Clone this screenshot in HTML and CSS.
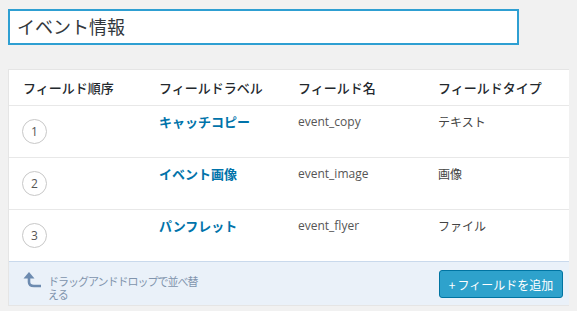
FILE: index.html
```html
<!DOCTYPE html>
<html lang="ja">
<head>
    <meta charset="UTF-8">
    <meta name="viewport" content="width=device-width, initial-scale=1.0">
    <title>イベント情報</title>
    <link rel="stylesheet" href="styles.css">
</head>
<body>
    <div class="title-box">イベント情報</div>

    <div class="field-table">
        <div class="row head">
            <div class="cell">フィールド順序</div>
            <div class="cell">フィールドラベル</div>
            <div class="cell">フィールド名</div>
            <div class="cell">フィールドタイプ</div>
        </div>

        <div class="row">
            <div class="cell order"><span class="num">1</span></div>
            <div class="cell label"><a href="#">キャッチコピー</a></div>
            <div class="cell name">event_copy</div>
            <div class="cell type">テキスト</div>
        </div>

        <div class="row">
            <div class="cell order"><span class="num">2</span></div>
            <div class="cell label"><a href="#">イベント画像</a></div>
            <div class="cell name">event_image</div>
            <div class="cell type">画像</div>
        </div>

        <div class="row">
            <div class="cell order"><span class="num">3</span></div>
            <div class="cell label"><a href="#">パンフレット</a></div>
            <div class="cell name">event_flyer</div>
            <div class="cell type">ファイル</div>
        </div>

        <div class="table-footer">
            <div class="hint">
                <svg class="hint-arrow" width="20" height="20" viewBox="0 0 20 20">
                    <path d="M7 8 V12 Q7 16 12 16 H19" fill="none" stroke="#6d8bb0" stroke-width="2.6"/>
                    <path d="M1.5 8.5 L7 2 L12.5 8.5 Z" fill="#6d8bb0"/>
                </svg>
                <span class="hint-text">ドラッグアンドドロップで並べ替える</span>
            </div>
            <button class="add-btn"><span class="plus">+</span>フィールドを追加</button>
        </div>
    </div>
</body>
</html>
```

FILE: styles.css
```css
body {
    margin: 8px;
    background-color: #f1f1f1;
    font-family: "Noto Sans CJK JP", "Open Sans", sans-serif;
    color: #23282d;
}

.title-box {
    margin-top: 1px;
    width: 511px;
    height: 36px;
    box-sizing: border-box;
    border: 2px solid #2e9fd2;
    background: #fff;
    padding-left: 7px;
    font-size: 18px;
    line-height: 31px;
    color: #32373c;
}

.field-table {
    margin-top: 24px;
    width: 562px;
    background: #fff;
    border: 1px solid #e5e5e5;
    box-sizing: border-box;
}

.row {
    display: grid;
    grid-template-columns: 136px 139px 140px 1fr;
    height: 51px;
    border-top: 1px solid #e8e8e8;
}

.row.head {
    height: 35px;
    border-top: none;
    align-items: center;
    font-size: 13px;
    font-weight: 500;
}

.cell {
    padding-left: 14px;
}

.row:not(.head) .cell {
    padding-top: 7px;
    font-size: 12px;
    line-height: 18px;
}

.row:not(.head) .order {
    padding-top: 0;
    padding-left: 13px;
    align-self: center;
}

.num {
    display: flex;
    width: 23px;
    height: 23px;
    border: 1px solid #c8c8c8;
    border-radius: 50%;
    align-items: center;
    justify-content: center;
    font-family: "Open Sans", sans-serif;
    font-size: 12px;
    color: #555;
}

.label a {
    color: #0073aa;
    font-weight: 700;
    font-size: 13px;
    text-decoration: none;
}

.name {
    font-family: "Open Sans", sans-serif;
    color: #555;
}

.type {
    color: #444;
}

.table-footer {
    display: flex;
    justify-content: space-between;
    align-items: flex-start;
    background: #eaf1f9;
    border-top: 1px solid #c9d9ec;
    padding: 8px 6px 7px 13px;
    height: 28px;
}

.hint {
    display: flex;
    align-items: flex-start;
}

.hint-arrow {
    flex: none;
    margin-top: 0;
}

.hint-text {
    width: 156px;
    margin-left: 6px;
    margin-top: 5px;
    font-size: 11px;
    line-height: 13px;
    letter-spacing: -1px;
    color: #8194ad;
}

.add-btn {
    width: 124px;
    height: 28px;
    background-color: #2ea2cc;
    border: 1px solid #0074a2;
    border-radius: 3px;
    color: #fff;
    font-family: "Noto Sans CJK JP", sans-serif;
    font-size: 12px;
    padding: 0;
    cursor: pointer;
}

.plus {
    margin-right: 2px;
}
```
